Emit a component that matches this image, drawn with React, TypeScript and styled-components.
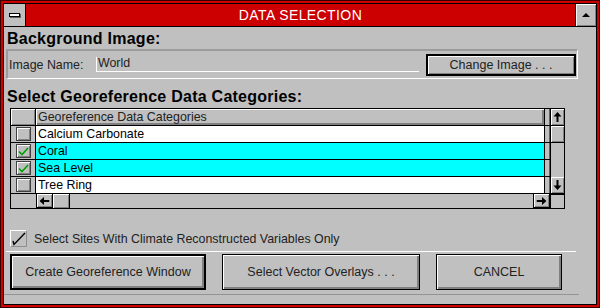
import styled, { createGlobalStyle } from "styled-components";

const GlobalStyle = createGlobalStyle`
  html, body { margin: 0; padding: 0; background: #fff; }
  body { font-family: "Liberation Sans", Arial, sans-serif; }
  * { box-sizing: border-box; }
`;

const categories = [
  { name: "Calcium Carbonate", checked: false },
  { name: "Coral", checked: true },
  { name: "Sea Level", checked: true },
  { name: "Tree Ring", checked: false },
];

function Arrow({ dir }: { dir: "up" | "down" | "left" | "right" }) {
  const rot = { up: 0, right: 90, down: 180, left: 270 }[dir];
  return (
    <svg width="9" height="10" viewBox="0 0 9 10" style={{ transform: `rotate(${rot}deg)` }}>
      <path d="M4.5 0 L8.5 4.5 L5.5 4.5 L5.5 10 L3.5 10 L3.5 4.5 L0.5 4.5 Z" fill="#000" />
    </svg>
  );
}

export default function App() {
  return (
    <>
      <GlobalStyle />
      <Frame>
        <Inner>
          <TitleBar>
            <SysBox>
              <SysGlyph />
            </SysBox>
            <Title>DATA SELECTION</Title>
            <MaxBox>
              <Triangle />
            </MaxBox>
          </TitleBar>
          <Client>
            <Heading $top={3}>Background Image:</Heading>
            <GroupBox>
              <Label>Image Name:</Label>
              <Field>World</Field>
              <ChangeButton>Change Image . . .</ChangeButton>
            </GroupBox>
            <Heading $top={9}>Select Georeference Data Categories:</Heading>
            <Grid>
              <GridBody>
                <Row $header>
                  <CheckCell $header />
                  <TextCell $header>Georeference Data Categories</TextCell>
                  <Strip />
                </Row>
                {categories.map((c) => (
                  <Row key={c.name} $selected={c.checked}>
                    <CheckCell>
                      <RowCheck>
                        {c.checked && (
                          <svg width="11" height="9" viewBox="0 0 11 9">
                            <path d="M1 4.5 L4 7.5 L10 1" stroke="#00a000" strokeWidth="1.6" fill="none" />
                          </svg>
                        )}
                      </RowCheck>
                    </CheckCell>
                    <TextCell>{c.name}</TextCell>
                    <Strip />
                  </Row>
                ))}
                <HScroll>
                  <HScrollPad />
                  <ScrollBtn $w={17}>
                    <Arrow dir="left" />
                  </ScrollBtn>
                  <Thumb $w={17} />
                  <Track />
                  <ScrollBtn $w={17}>
                    <Arrow dir="right" />
                  </ScrollBtn>
                </HScroll>
              </GridBody>
              <VScroll>
                <VBtn>
                  <Arrow dir="up" />
                </VBtn>
                <VThumb />
                <Track />
                <VBtn>
                  <Arrow dir="down" />
                </VBtn>
                <Corner />
              </VScroll>
            </Grid>
            <OptionRow>
              <OptionBox>
                <svg width="15" height="15" viewBox="0 0 15 15">
                  <path d="M2 10 L3 13.5 L14 2" stroke="#000" strokeWidth="1.4" fill="none" />
                </svg>
              </OptionBox>
              <OptionText>Select Sites With Climate Reconstructed Variables Only</OptionText>
            </OptionRow>
            <Rule $color="#ffffff" $left={2} $width={570} $top={4} />
            <ButtonRow>
              <Button $w={196} $primary>Create Georeference Window</Button>
              <Button $w={198}>Select Vector Overlays . . .</Button>
              <Button $w={126}>CANCEL</Button>
            </ButtonRow>
            <Rule $color="#939393" $left={0} $width={575} $top={4} />
          </Client>
        </Inner>
      </Frame>
    </>
  );
}

const Frame = styled.div`
  width: 600px;
  height: 308px;
  background: #cc0000;
  border: 1px solid #3a0000;
  padding: 2px;
`;

const Inner = styled.div`
  height: 100%;
  border: 1px solid #000;
  display: flex;
  flex-direction: column;
`;

const TitleBar = styled.div`
  height: 23px;
  display: flex;
  border-bottom: 1px solid #000;
`;

const SysBox = styled.div`
  width: 22px;
  background: #c0c0c0;
  border-right: 1px solid #000;
  display: flex;
  align-items: center;
  justify-content: center;
`;

const SysGlyph = styled.div`
  width: 11px;
  height: 4px;
  background: #fff;
  border: 1px solid #000;
  box-shadow: 1px 1px 0 #606060;
`;

const Title = styled.div`
  flex: 1;
  color: #fff;
  font-size: 14px;
  letter-spacing: 0.4px;
  display: flex;
  align-items: center;
  justify-content: center;
`;

const MaxBox = styled.div`
  width: 21px;
  background: #c0c0c0;
  border-left: 1px solid #000;
  box-shadow: inset 1px 1px #fff, inset -1px -1px #808080;
  display: flex;
  align-items: center;
  justify-content: center;
`;

const Triangle = styled.div`
  width: 0;
  height: 0;
  border-left: 4px solid transparent;
  border-right: 4px solid transparent;
  border-bottom: 4px solid #000;
`;

const Client = styled.div`
  flex: 1;
  background: #c0c0c0;
  display: flex;
  flex-direction: column;
`;

const Heading = styled.div<{ $top: number }>`
  margin: ${(p) => p.$top}px 0 0 3px;
  font-size: 16px;
  letter-spacing: 0.25px;
  font-weight: bold;
  line-height: 18px;
  color: #000;
`;

const GroupBox = styled.div`
  margin: 1px 0 0 2px;
  width: 572px;
  height: 30px;
  border-top: 2px solid #9c9c9c;
  border-left: 2px solid #9c9c9c;
  border-bottom: 1px solid #fff;
  border-right: 1px solid #fff;
  display: flex;
  align-items: center;
  padding: 0 1px 0 1px;
`;

const Label = styled.div`
  width: 87px;
  font-size: 12.4px;
  color: #222;
`;

const Field = styled.div`
  width: 323px;
  height: 15px;
  margin-top: -1px;
  border-left: 1px solid #fff;
  border-bottom: 1px solid #fff;
  padding-left: 1px;
  font-size: 12.4px;
  line-height: 13px;
  color: #222;
`;

const ChangeButton = styled.div`
  margin-left: auto;
  width: 150px;
  height: 22px;
  border: 2px solid #000;
  box-shadow: inset 1px 1px #fff, inset -1px -1px #808080;
  font-size: 12.5px;
  color: #222;
  display: flex;
  align-items: center;
  justify-content: center;
`;

const Grid = styled.div`
  margin: 2px 0 0 6px;
  width: 555px;
  height: 101px;
  border: 1px solid #000;
  display: flex;
`;

const GridBody = styled.div`
  flex: 1;
  display: flex;
  flex-direction: column;
`;

const Row = styled.div<{ $header?: boolean; $selected?: boolean }>`
  height: 17px;
  display: flex;
  border-bottom: 1px solid #000;
  background: ${(p) => (p.$header ? "#c0c0c0" : p.$selected ? "#00ffff" : "#fff")};
`;

const CheckCell = styled.div<{ $header?: boolean }>`
  width: 25px;
  border-right: 1px solid #000;
  background: #c0c0c0;
  display: flex;
  align-items: center;
  justify-content: center;
  box-shadow: ${(p) => (p.$header ? "inset 1px 1px #fff, inset -1px -1px #808080" : "none")};
`;

const RowCheck = styled.div`
  width: 15px;
  height: 14px;
  border: 1px solid #404040;
  background: #c0c0c0;
  box-shadow: inset 1px 1px #fff, inset -1px -1px #808080;
  display: flex;
  align-items: center;
  justify-content: center;
`;

const TextCell = styled.div<{ $header?: boolean }>`
  flex: 1;
  padding-left: 2px;
  font-size: 12.4px;
  line-height: 16px;
  color: ${(p) => (p.$header ? "#222" : "#000")};
  box-shadow: ${(p) => (p.$header ? "inset 1px 1px #fff, inset -2px -2px #808080" : "none")};
`;

const Strip = styled.div`
  width: 6px;
  background: #c0c0c0;
  border-left: 1px solid #000;
  border-right: 1px solid #606060;
`;

const HScroll = styled.div`
  flex: 1;
  display: flex;
  background: #c0c0c0;
`;

const HScrollPad = styled.div`
  width: 25px;
`;

const ScrollBtn = styled.div<{ $w: number }>`
  width: ${(p) => p.$w}px;
  border: 1px solid #000;
  border-top: none;
  background: #c0c0c0;
  box-shadow: inset 1px 1px #fff, inset -1px -1px #808080;
  display: flex;
  align-items: center;
  justify-content: center;
`;

const Thumb = styled.div<{ $w: number }>`
  width: ${(p) => p.$w}px;
  border-right: 1px solid #000;
  box-shadow: inset 1px 1px #fff, inset -1px -1px #808080;
`;

const Track = styled.div`
  flex: 1;
  background: #c0c0c0;
`;

const VScroll = styled.div`
  width: 14px;
  border-left: 1px solid #000;
  display: flex;
  flex-direction: column;
  background: #c0c0c0;
`;

const VBtn = styled.div`
  height: 17px;
  border-bottom: 1px solid #000;
  box-shadow: inset 1px 1px #fff, inset -1px -1px #808080;
  display: flex;
  align-items: center;
  justify-content: center;
`;

const VThumb = styled.div`
  height: 17px;
  border-bottom: 1px solid #000;
  box-shadow: inset 1px 1px #fff, inset -1px -1px #808080;
`;

const Corner = styled.div`
  height: 14px;
  border-top: 1px solid #000;
`;

const OptionRow = styled.div`
  margin: 21px 0 0 6px;
  display: flex;
  align-items: center;
  gap: 7px;
`;

const OptionBox = styled.div`
  width: 17px;
  height: 17px;
  border-top: 1px solid #fff;
  border-left: 1px solid #fff;
  border-right: 1px solid #909090;
  border-bottom: 1px solid #909090;
  display: flex;
  align-items: center;
  justify-content: center;
`;

const OptionText = styled.div`
  font-size: 12.4px;
  color: #222;
`;

const Rule = styled.div<{ $color: string; $left: number; $width: number; $top: number }>`
  margin: ${(p) => p.$top}px 0 0 ${(p) => p.$left}px;
  width: ${(p) => p.$width}px;
  height: 1px;
  background: ${(p) => p.$color};
`;

const ButtonRow = styled.div`
  margin: 2px 0 0 6px;
  display: flex;
  gap: 16px;
`;

const Button = styled.div<{ $w: number; $primary?: boolean }>`
  width: ${(p) => p.$w}px;
  height: 36px;
  border: ${(p) => (p.$primary ? "2px" : "1px")} solid #000;
  box-shadow: inset 1px 1px #fff, inset -2px -2px #808080;
  font-size: 12.5px;
  color: #222;
  display: flex;
  align-items: center;
  justify-content: center;
`;
